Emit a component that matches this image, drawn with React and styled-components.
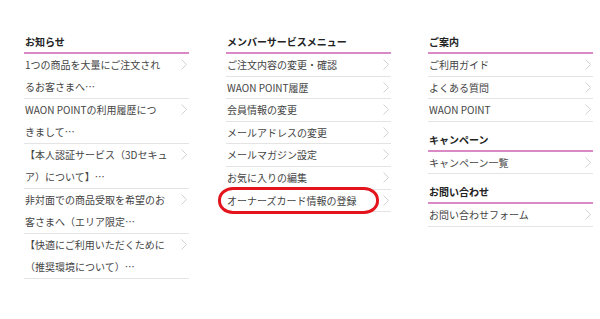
import styled, { createGlobalStyle } from "styled-components";

const GlobalStyle = createGlobalStyle`
  html, body { margin: 0; padding: 0; background: #fff; }
  body {
    font-family: "Noto Sans CJK JP", "Noto Sans", "Liberation Sans", sans-serif;
    -webkit-font-smoothing: antialiased;
  }
`;

const Page = styled.div`
  width: 600px;
  height: 319px;
  box-sizing: border-box;
  padding: 30px 0 0 24px;
  display: grid;
  grid-template-columns: 165px 165px 165px;
  column-gap: 37px;
  align-items: start;
`;

const Column = styled.div`
  display: flex;
  flex-direction: column;
`;

const Heading = styled.h3`
  margin: ${(p) => (p.$first ? "0" : "6px")} 0 0;
  padding: 3px 0 1px 1px;
  font-size: 10px;
  line-height: 18px;
  font-weight: 700;
  color: #222;
  border-bottom: 2px solid #d98ac6;
`;

const List = styled.ul`
  list-style: none;
  margin: 0;
  padding: 0;
`;

const Item = styled.li`
  position: relative;
  display: flex;
  align-items: flex-start;
  justify-content: space-between;
  border-bottom: 1px solid #e4e4e4;
  font-size: 10px;
  line-height: 21.6px;
  padding: 0 0 ${(p) => (p.$multi ? "0.8px" : "0")} 1px;
  color: #444;
`;

const Label = styled.span`
  display: flex;
  flex-direction: column;
  white-space: nowrap;
`;

const Chevron = styled.svg`
  flex: none;
  width: 6px;
  height: 11px;
  margin: 5px 2px 0 0;
`;

const Circle = styled.span`
  position: absolute;
  left: -8px;
  top: -3px;
  width: 161px;
  height: 27px;
  box-sizing: border-box;
  border: 3px solid #e4141c;
  border-radius: 15px / 13px;
  pointer-events: none;
`;

const Arrow = () => (
  <Chevron viewBox="0 0 6 11">
    <polyline points="0.5,0.5 5.5,5.5 0.5,10.5" fill="none" stroke="#d2d2d2" strokeWidth="1" />
  </Chevron>
);

const MenuItem = ({ lines, marked }) => (
  <Item $multi={lines.length > 1}>
    <Label>
      {lines.map((l) => (
        <span key={l}>{l}</span>
      ))}
    </Label>
    <Arrow />
    {marked && <Circle />}
  </Item>
);

const news = [
  ["1つの商品を大量にご注文され", "るお客さまへ…"],
  ["WAON POINTの利用履歴につ", "きまして…"],
  ["【本人認証サービス（3Dセキュ", "ア）について】…"],
  ["非対面での商品受取を希望のお", "客さまへ（エリア限定…"],
  ["【快適にご利用いただくために", "（推奨環境について）…"],
];

const member = [
  "ご注文内容の変更・確認",
  "WAON POINT履歴",
  "会員情報の変更",
  "メールアドレスの変更",
  "メールマガジン設定",
  "お気に入りの編集",
  "オーナーズカード情報の登録",
];

const guide = ["ご利用ガイド", "よくある質問", "WAON POINT"];

export default function App() {
  return (
    <>
      <GlobalStyle />
      <Page>
        <Column>
          <Heading $first>お知らせ</Heading>
          <List>
            {news.map((n) => (
              <MenuItem key={n[0]} lines={n} />
            ))}
          </List>
        </Column>
        <Column>
          <Heading $first>メンバーサービスメニュー</Heading>
          <List>
            {member.map((m) => (
              <MenuItem key={m} lines={[m]} marked={m === "オーナーズカード情報の登録"} />
            ))}
          </List>
        </Column>
        <Column>
          <Heading $first>ご案内</Heading>
          <List>
            {guide.map((g) => (
              <MenuItem key={g} lines={[g]} />
            ))}
          </List>
          <Heading>キャンペーン</Heading>
          <List>
            <MenuItem lines={["キャンペーン一覧"]} />
          </List>
          <Heading>お問い合わせ</Heading>
          <List>
            <MenuItem lines={["お問い合わせフォーム"]} />
          </List>
        </Column>
      </Page>
    </>
  );
}
